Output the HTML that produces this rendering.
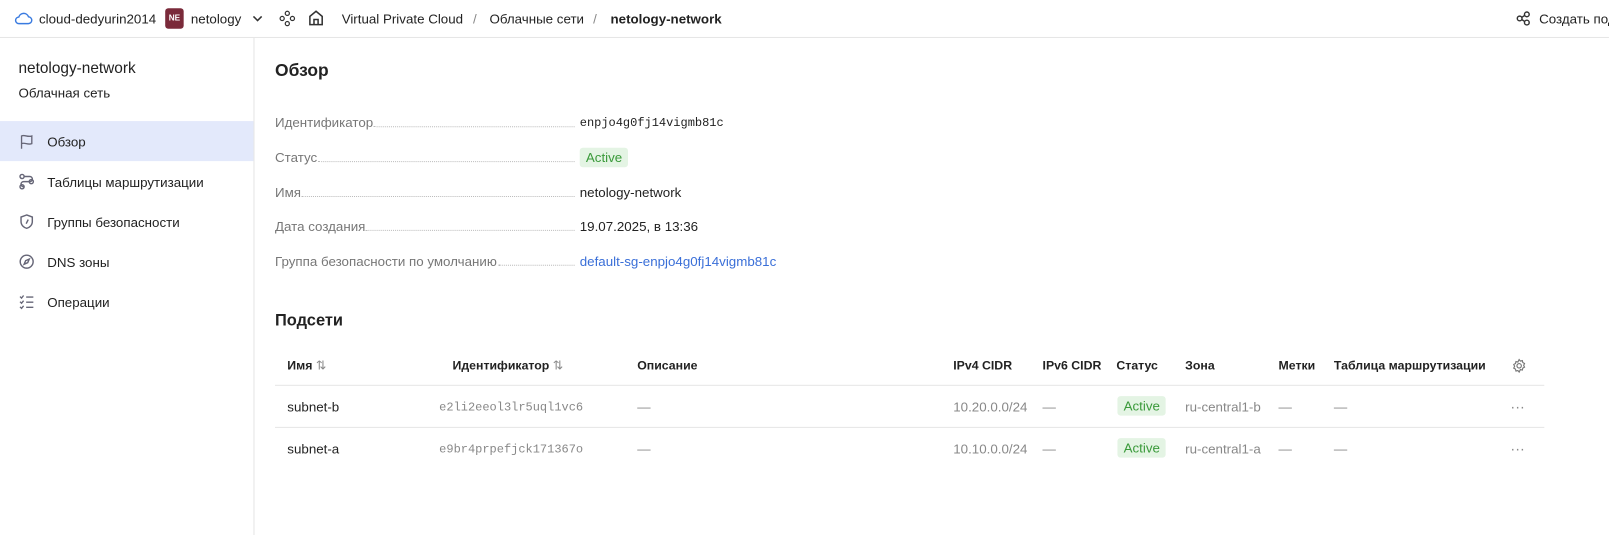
<!DOCTYPE html>
<html><head><meta charset="utf-8"><style>
*{box-sizing:border-box;margin:0;padding:0}
html,body{width:1609px;height:535px;overflow:hidden;background:#fff}
body{font-family:"Liberation Sans",sans-serif;font-size:13px;color:#222;position:relative}
#w{position:absolute;left:0;top:0;width:1568px;height:522px;transform:scale(1.0261);transform-origin:0 0}
.a{position:absolute;white-space:nowrap}
.top{position:absolute;left:0;top:0;width:1568px;height:37px;border-bottom:1px solid #e5e5e5}
.tt{font-size:13px;top:11px}
.side{position:absolute;left:0;top:37px;width:248px;height:500px;border-right:1px solid #e5e5e5}
.act{position:absolute;left:0;top:118px;width:247px;height:39px;background:#e3e9fb}
.lbl{color:#777}
.dots{position:absolute;border-bottom:1px dotted #bbb;height:1px}
.mono{font-family:"Liberation Mono",monospace;font-size:11.7px}
.badge{position:absolute;background:#e4f4e4;color:#3a9a3a;padding:2px 6px;border-radius:3px;font-size:13px}
.th{font-weight:bold;color:#222;font-size:12px}
.hl{position:absolute;left:268px;width:1237px;height:1px;background:#e5e5e5}
.g{color:#888}
svg{position:absolute}
</style></head><body><div id="w">
<div class="top"></div>
<svg style="left:14px;top:10px" width="18" height="16" viewBox="0 0 18 16"><path d="M4.5 13h9a3.3 3.3 0 0 0 .3-6.6A5 5 0 0 0 4.3 6.6 3.2 3.2 0 0 0 4.5 13z" fill="none" stroke="#3a7be0" stroke-width="1.4"/></svg>
<div class="a tt" style="left:38px">cloud-dedyurin2014</div>
<div class="a" style="left:161px;top:8px;width:18px;height:20px;background:#7a2a3a;color:#fff;border-radius:3px;font-size:8px;font-weight:bold;text-align:center;line-height:20px">NE</div>
<div class="a tt" style="left:186px">netology</div>
<svg style="left:245px;top:12px" width="12" height="12" viewBox="0 0 12 12"><path d="M2 4l4 4 4-4" fill="none" stroke="#333" stroke-width="1.5"/></svg>
<svg style="left:272px;top:10px" width="16" height="16" viewBox="0 0 16 16" fill="none" stroke="#333" stroke-width="1.2"><circle cx="8" cy="3" r="2"/><circle cx="3" cy="8" r="2"/><circle cx="13" cy="8" r="2"/><circle cx="8" cy="13" r="2"/></svg>
<svg style="left:300px;top:9px" width="16" height="17" viewBox="0 0 16 17" fill="none" stroke="#333" stroke-width="1.5"><path d="M2 15V7l6-5 6 5v8z"/><path d="M6 15v-5h4v5"/></svg>
<div class="a tt" style="left:333px">Virtual Private Cloud</div>
<div class="a tt g" style="left:461px">/</div>
<div class="a tt" style="left:477px">Облачные сети</div>
<div class="a tt g" style="left:578px">/</div>
<div class="a tt" style="left:595px;font-weight:bold">netology-network</div>
<svg style="left:1477px;top:10px" width="16" height="16" viewBox="0 0 16 16" fill="none" stroke="#333" stroke-width="1.4"><circle cx="4" cy="8" r="2.3"/><circle cx="11" cy="4" r="2.3"/><circle cx="11" cy="12" r="2.3"/><path d="M6 7l3-2M6 9l3 2"/></svg>
<div class="a tt" style="left:1500px">Создать под</div>

<div class="side"></div>
<div class="a" style="left:18px;top:58px;font-size:15px">netology-network</div>
<div class="a" style="left:18px;top:83px">Облачная сеть</div>
<div class="act"></div>
<svg style="left:18px;top:130px" width="16" height="16" viewBox="0 0 16 16" fill="none" stroke="#667" stroke-width="1.3"><path d="M3 15V2.5c3-1.5 6 1.5 10 0V10c-4 1.5-7-1.5-10 0"/></svg>
<div class="a" style="left:46px;top:131px">Обзор</div>
<svg style="left:18px;top:169px" width="16" height="16" viewBox="0 0 16 16" fill="none" stroke="#667" stroke-width="1.4"><circle cx="3.5" cy="3" r="2"/><circle cx="3.5" cy="13" r="2"/><circle cx="12.5" cy="8" r="2"/><path d="M5.5 3H11a2.5 2.5 0 0 1 0 5H5a2.5 2.5 0 0 0 0 5h.5"/></svg>
<div class="a" style="left:46px;top:170px">Таблицы маршрутизации</div>
<svg style="left:18px;top:208px" width="16" height="16" viewBox="0 0 16 16" fill="none" stroke="#667" stroke-width="1.4"><path d="M8 1.5l5.5 2v4.5c0 3.5-3 6-5.5 6.5C5.5 14 2.5 11.5 2.5 8V3.5z"/><path d="M9.5 6l-2 4"/></svg>
<div class="a" style="left:46px;top:209px">Группы безопасности</div>
<svg style="left:18px;top:247px" width="16" height="16" viewBox="0 0 16 16" fill="none" stroke="#667" stroke-width="1.4"><circle cx="8" cy="8" r="6.3"/><path d="M10.5 5.5L9 9 5.5 10.5 7 7z"/></svg>
<div class="a" style="left:46px;top:248px">DNS зоны</div>
<svg style="left:18px;top:286px" width="16" height="16" viewBox="0 0 16 16" fill="none" stroke="#667" stroke-width="1.3"><path d="M1.5 3l1.5 1.5L5 2M1.5 8l1.5 1.5L5 7M1.5 13l1.5 1.5L5 12M7.5 3.5h7M7.5 8.5h7M7.5 13.5h7"/></svg>
<div class="a" style="left:46px;top:287px">Операции</div>

<div class="a" style="left:268px;top:59px;font-size:17px;font-weight:bold">Обзор</div>
<div class="a lbl" style="left:268px;top:112px">Идентификатор</div><div class="dots" style="left:364px;width:196px;top:123px"></div>
<div class="a mono" style="left:565px;top:113px">enpjo4g0fj14vigmb81c</div>
<div class="a lbl" style="left:268px;top:146px">Статус</div><div class="dots" style="left:310px;width:250px;top:157px"></div>
<div class="badge" style="left:565px;top:144px">Active</div>
<div class="a lbl" style="left:268px;top:180px">Имя</div><div class="dots" style="left:294px;width:266px;top:191px"></div>
<div class="a" style="left:565px;top:180px">netology-network</div>
<div class="a lbl" style="left:268px;top:213px">Дата создания</div><div class="dots" style="left:356px;width:204px;top:224px"></div>
<div class="a" style="left:565px;top:213px">19.07.2025, в 13:36</div>
<div class="a lbl" style="left:268px;top:247px">Группа безопасности по умолчанию</div><div class="dots" style="left:486px;width:74px;top:258px"></div>
<div class="a" style="left:565px;top:247px;color:#3a6fd8">default-sg-enpjo4g0fj14vigmb81c</div>

<div class="a" style="left:268px;top:304px;font-size:16px;font-weight:bold">Подсети</div>
<div class="a th" style="left:280px;top:349px">Имя <span class="g" style="font-weight:normal">⇅</span></div>
<div class="a th" style="left:441px;top:349px">Идентификатор <span class="g" style="font-weight:normal">⇅</span></div>
<div class="a th" style="left:621px;top:349px">Описание</div>
<div class="a th" style="left:929px;top:349px">IPv4 CIDR</div>
<div class="a th" style="left:1016px;top:349px">IPv6 CIDR</div>
<div class="a th" style="left:1088px;top:349px">Статус</div>
<div class="a th" style="left:1155px;top:349px">Зона</div>
<div class="a th" style="left:1246px;top:349px">Метки</div>
<div class="a th" style="left:1300px;top:349px">Таблица маршрутизации</div>
<svg style="left:1473px;top:349px" width="15" height="15" viewBox="0 0 16 16" fill="none" stroke="#777" stroke-width="1.2"><circle cx="8" cy="8" r="2.3"/><path d="M8 1.5l1.3 1.6 2-.5.5 2 1.8 1-.9 1.9.9 1.9-1.8 1-.5 2-2-.5L8 14.5l-1.3-1.6-2 .5-.5-2-1.8-1 .9-1.9-.9-1.9 1.8-1 .5-2 2 .5z"/></svg>
<div class="hl" style="top:375px"></div>
<div class="a" style="left:280px;top:389px">subnet-b</div>
<div class="a mono g" style="left:428px;top:390px">e2li2eeol3lr5uql1vc6</div>
<div class="a g" style="left:621px;top:389px">—</div>
<div class="a g" style="left:929px;top:389px">10.20.0.0/24</div>
<div class="a g" style="left:1016px;top:389px">—</div>
<div class="badge" style="left:1089px;top:386px">Active</div>
<div class="a g" style="left:1155px;top:389px">ru-central1-b</div>
<div class="a g" style="left:1246px;top:389px">—</div>
<div class="a g" style="left:1300px;top:389px">—</div>
<div class="a g" style="left:1472px;top:388px;font-size:14px">···</div>
<div class="hl" style="top:416px"></div>
<div class="a" style="left:280px;top:430px">subnet-a</div>
<div class="a mono g" style="left:428px;top:431px">e9br4prpefjck171367o</div>
<div class="a g" style="left:621px;top:430px">—</div>
<div class="a g" style="left:929px;top:430px">10.10.0.0/24</div>
<div class="a g" style="left:1016px;top:430px">—</div>
<div class="badge" style="left:1089px;top:427px">Active</div>
<div class="a g" style="left:1155px;top:430px">ru-central1-a</div>
<div class="a g" style="left:1246px;top:430px">—</div>
<div class="a g" style="left:1300px;top:430px">—</div>
<div class="a g" style="left:1472px;top:429px;font-size:14px">···</div>
</div></body></html>
